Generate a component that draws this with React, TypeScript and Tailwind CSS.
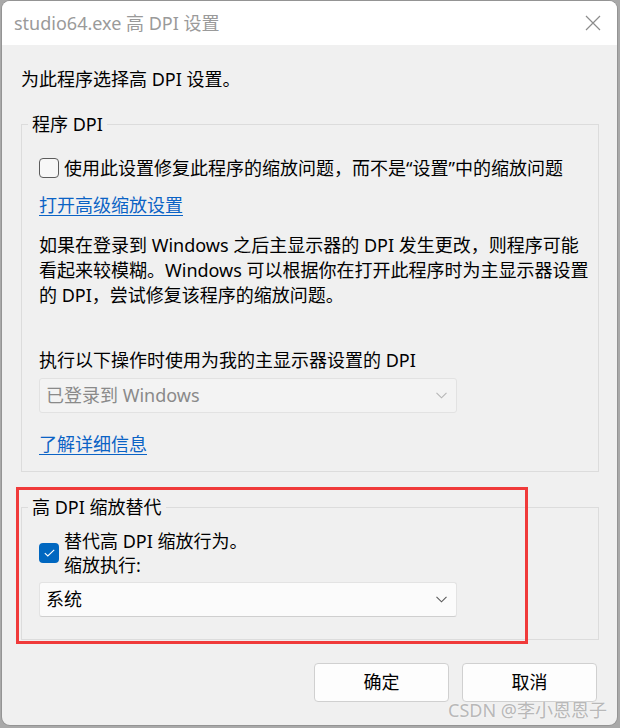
import React from "react";

function Chevron({ color }: { color: string }) {
  return (
    <svg width="11" height="7" viewBox="0 0 11 7" fill="none">
      <path d="M0.5 0.8 L5.5 5.8 L10.5 0.8" stroke={color} strokeWidth="1.1" />
    </svg>
  );
}

export default function App() {
  return (
    <div className="w-[620px] h-[728px] bg-[#a9a9a9] pt-[1px] pl-[2px] font-['Noto_Sans','Noto_Sans_CJK_SC',sans-serif] text-[18px] text-black relative">
      {/* Window */}
      <div className="w-[615px] h-[724px] rounded-[8px] overflow-hidden flex flex-col bg-[#f0f0f0] shadow-[0_0_0_1px_rgba(0,0,0,0.12)]">
        {/* Title bar */}
        <div className="h-[44px] bg-white flex items-center justify-between pl-[12px] pr-[16px] shrink-0">
          <span className="text-[#9a9a9a] leading-[24px]">studio64.exe 高 DPI 设置</span>
          <svg width="16" height="16" viewBox="0 0 16 16" fill="none">
            <path d="M1 1 L15 15 M15 1 L1 15" stroke="#8c8c8c" strokeWidth="1.2" />
          </svg>
        </div>

        {/* Body */}
        <div className="flex-1 flex flex-col px-[19px] pt-[22px]">
          <p className="leading-[24px]">为此程序选择高 DPI 设置。</p>

          {/* 程序 DPI */}
          <fieldset className="mt-[21px] w-[578px] min-w-0 border border-[#dcdcdc]">
            <legend className="ml-[6px] px-[4px] leading-[24px]">程序 DPI</legend>
            <div className="px-[17px] pt-[20px] pb-[15px] flex flex-col">
              <div className="flex items-center gap-[5px] leading-[24px]">
                <div className="w-[20px] h-[20px] rounded-[4px] border border-[#5c5c5c] bg-[#f7f7f7]" />
                <span>使用此设置修复此程序的缩放问题，而不是“设置”中的缩放问题</span>
              </div>
              <a className="mt-[13px] self-start leading-[24px] text-[#0b63c5] underline underline-offset-[3px]">打开高级缩放设置</a>
              <p className="mt-[16px] leading-[25px] whitespace-nowrap">
                如果在登录到 Windows 之后主显示器的 DPI 发生更改，则程序可能
                <br />
                看起来较模糊。Windows 可以根据你在打开此程序时为主显示器设置
                <br />
                的 DPI，尝试修复该程序的缩放问题。
              </p>
              <p className="mt-[40px] leading-[24px]">执行以下操作时使用为我的主显示器设置的 DPI</p>
              <div className="mt-[6px] w-[418px] h-[35px] bg-[#f3f3f3] border border-[#e2e2e2] rounded-[3px] flex items-center justify-between pl-[6px] pr-[9px] text-[#8a8a8a]">
                <span>已登录到 Windows</span>
                <Chevron color="#b5b5b5" />
              </div>
              <a className="mt-[19px] self-start leading-[24px] text-[#0b63c5] underline underline-offset-[3px]">了解详细信息</a>
            </div>
          </fieldset>

          {/* 高 DPI 缩放替代 */}
          <fieldset className="mt-[23px] w-[578px] min-w-0 border border-[#dcdcdc]">
            <legend className="ml-[6px] px-[4px] leading-[24px]">高 DPI 缩放替代</legend>
            <div className="px-[17px] pt-[10px] pb-[22px] flex flex-col">
              <div className="flex items-center gap-[5px]">
                <div className="w-[20px] h-[20px] rounded-[4px] bg-[#0067c0] flex items-center justify-center">
                  <svg width="11" height="8" viewBox="0 0 11 8" fill="none">
                    <path d="M0.8 4.2 L3.8 7 L10.2 0.8" stroke="white" strokeWidth="1.1" />
                  </svg>
                </div>
                <div className="leading-[24px]">
                  <p>替代高 DPI 缩放行为。</p>
                  <p>缩放执行:</p>
                </div>
              </div>
              <div className="mt-[5px] w-[418px] h-[35px] bg-[#fbfbfb] border border-[#e3e3e3] border-b-[#cfcfcf] rounded-[3px] flex items-center justify-between pl-[6px] pr-[9px]">
                <span>系统</span>
                <Chevron color="#5a5a5a" />
              </div>
            </div>
          </fieldset>

          {/* Buttons */}
          <div className="mt-[23px] flex justify-end gap-[13px] pr-[1px]">
            <button className="w-[135px] h-[39px] bg-[#fdfdfd] border border-[#d0d0d0] rounded-[4px]">确定</button>
            <button className="w-[135px] h-[39px] bg-[#fdfdfd] border border-[#d0d0d0] rounded-[4px]">取消</button>
          </div>
        </div>
      </div>

      {/* Red annotation box */}
      <div className="absolute left-[16px] top-[487px] w-[512px] h-[157px] border-[3px] border-[#f03a3a] pointer-events-none" />

      {/* Watermark */}
      <span className="absolute left-[448px] top-[698px] leading-[24px] text-[#b8b8b8] [text-shadow:0_0_2px_rgba(255,255,255,0.8)]">
        CSDN @李小恩恩子
      </span>
    </div>
  );
}
